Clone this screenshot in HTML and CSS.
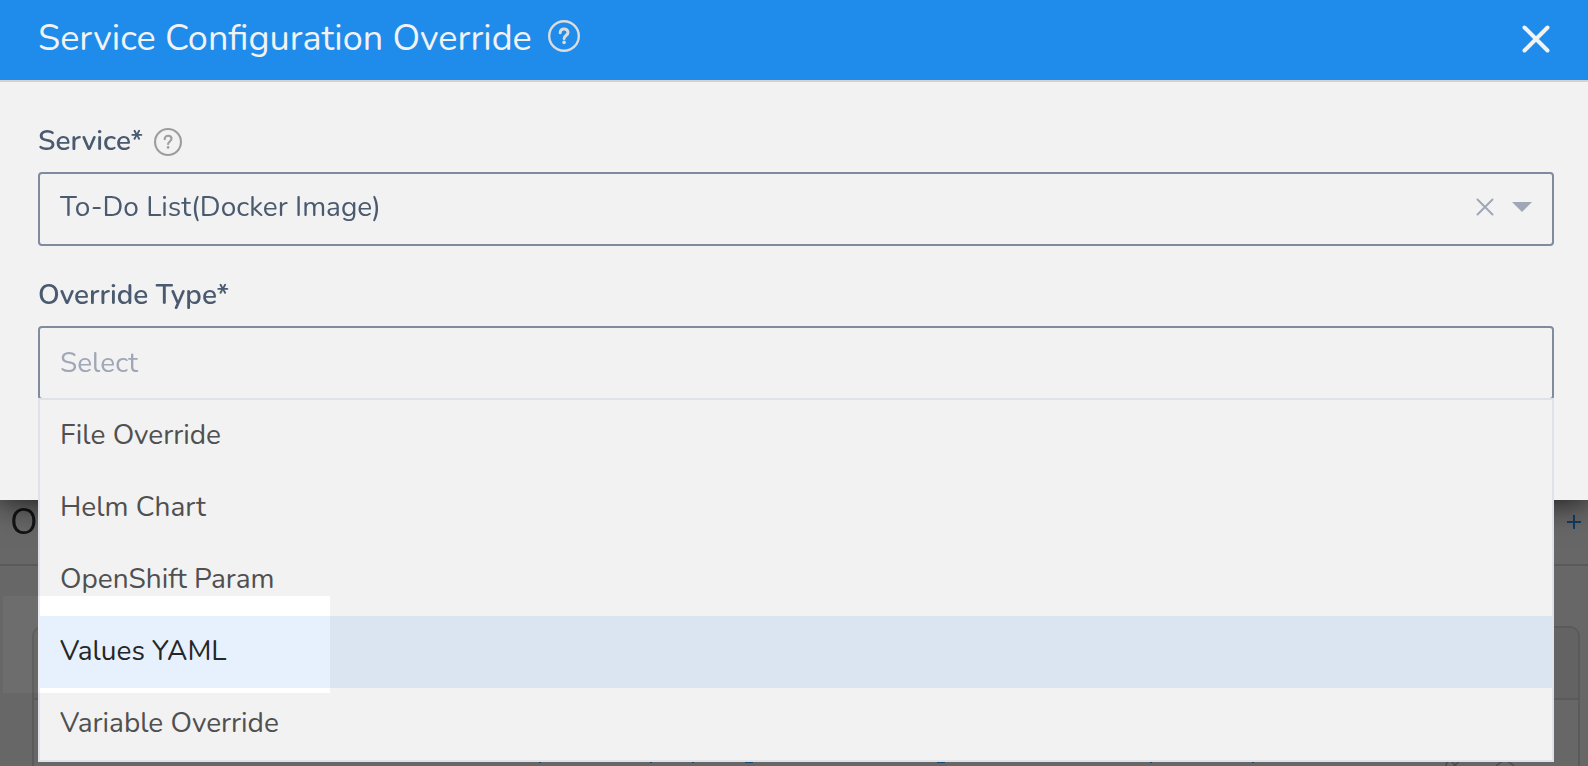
FILE: index.html
```html
<!DOCTYPE html>
<html lang="en">
<head>
<meta charset="utf-8">
<meta name="viewport" content="width=device-width, initial-scale=1">
<title>Service Configuration Override</title>
<link rel="stylesheet" href="styles.css">
</head>
<body>
<div class="page" aria-hidden="true">
  <div class="page-header">
    <span class="page-title">Ov</span>
    <svg class="page-add" width="14" height="14" viewBox="0 0 14 14"><path d="M7 0v14M0 7h14"/></svg>
  </div>
  <div class="panel">
    <div class="panel-head"></div>
    <div class="panel-body">
      <svg class="link-marks" width="1230" height="18" viewBox="0 0 1230 18"><path d="M505 .5h2M616 .5h2M658 .5h2M711 .5h8M903 .5h8M1116 .5h2M1218 .5h2"/></svg>
      <svg class="row-marks" width="74" height="18" viewBox="0 0 74 18"><path d="M2 4Q2 1 4 0M8 5L15 0M8 0l5 5M52 4l5-4Q61-2 65 0l5 4"/></svg>
    </div>
  </div>
</div>

<section class="modal" role="dialog" aria-labelledby="dialog-title">
  <header class="modal-header">
    <h1 class="modal-title" id="dialog-title">Service Configuration Override</h1>
    <button class="icon-button help help-light" type="button" aria-label="Help">
      <svg width="32" height="32" viewBox="0 0 32 32"><circle cx="16" cy="16" r="14.8"/><path class="mark" d="M12.2 12.8c0-2.4 1.7-3.9 3.9-3.9s3.9 1.4 3.9 3.5c0 3-3.9 3.1-3.9 6"/><circle class="dot" cx="16.1" cy="22.4" r="1.8"/></svg>
    </button>
    <button class="icon-button close" type="button" aria-label="Close">
      <svg width="28" height="28" viewBox="0 0 28 28"><path d="M2.5 2.5l23 23M25.5 2.5l-23 23"/></svg>
    </button>
  </header>
  <form class="form">
    <div class="field">
      <div class="label-row">
        <label for="service">Service*</label>
        <button class="icon-button help" type="button" aria-label="About service">
          <svg width="28" height="28" viewBox="0 0 32 32"><circle cx="16" cy="16" r="14.8"/><path d="M12.2 12.8c0-2.4 1.7-3.9 3.9-3.9s3.9 1.4 3.9 3.5c0 3-3.9 3.1-3.9 6"/><circle class="dot" cx="16.1" cy="22.2" r="1.5"/></svg>
        </button>
      </div>
      <div class="control control-filled">
        <input id="service" type="text" value="To-Do List(Docker Image)">
        <button class="icon-button clear" type="button" aria-label="Clear">
          <svg width="18" height="18" viewBox="0 0 18 18"><path d="M1.5 1.5l15 15M16.5 1.5l-15 15"/></svg>
        </button>
        <button class="icon-button arrow" type="button" aria-label="Open list">
          <svg width="20" height="10" viewBox="0 0 20 10"><path d="M0 0h20L10 10z"/></svg>
        </button>
      </div>
    </div>
    <div class="field">
      <div class="label-row">
        <label for="override-type">Override Type*</label>
      </div>
      <div class="control">
        <input id="override-type" type="text" placeholder="Select" role="combobox" aria-expanded="true" aria-controls="override-options">
        <ul class="menu" id="override-options" role="listbox">
          <li class="option" role="option">File Override</li>
          <li class="option" role="option">Helm Chart</li>
          <li class="option" role="option">OpenShift Param</li>
          <li class="option option-active" role="option" aria-selected="true"><span class="option-text">Values YAML</span><span class="spotlight"></span></li>
          <li class="option" role="option">Variable Override</li>
        </ul>
      </div>
    </div>
  </form>
</section>
</body>
</html>
```
FILE: styles.css
```css
* {
  box-sizing: border-box;
}

body {
  margin: 0;
  min-height: 100vh;
  overflow: hidden;
  background: #6d6d6d;
  font-family: Nunito, Lato, "Open Sans", sans-serif;
  font-size: 28px;
  line-height: 36px;
}

/* Dimmed page under the dialog */
.page {
  position: fixed;
  inset: 0;
  display: flex;
  flex-direction: column;
  padding-top: 480px;
}

.page-header {
  display: flex;
  align-items: center;
  justify-content: space-between;
  flex: none;
  height: 86px;
  padding: 0 7px 0 10px;
  border-bottom: 2px solid #5f5f5f;
}

.page-title {
  padding-top: 2px;
  font-size: 36px;
  color: #131415;
}

.page-add {
  fill: none;
  stroke: #153f63;
  stroke-width: 2;
}

.panel {
  flex: 1;
  display: flex;
  flex-direction: column;
  margin: 60px 8px 0 32px;
  border: 2px solid #5f5f5f;
  border-bottom: 0;
  border-radius: 10px 10px 0 0;
}

.panel-head {
  height: 72px;
  background: #696969;
  border-bottom: 2px solid #5f5f5f;
  border-radius: 8px 8px 0 0;
}

.panel-body {
  flex: 1;
  display: flex;
  align-items: flex-end;
  justify-content: space-between;
  padding-right: 60px;
  margin-bottom: -14px;
}

.link-marks {
  fill: none;
  stroke: #174a75;
}

.row-marks {
  fill: none;
  stroke: #505050;
  stroke-width: 1.5;
}

/* Dialog */
.modal {
  position: relative;
  min-height: 500px;
  background: #fff;
  box-shadow: 0 2px 30px rgba(0, 0, 0, 0.8);
}

.modal-header {
  display: flex;
  align-items: center;
  height: 82px;
  padding: 0 38px 2px;
  background: #2194f9;
  border-bottom: 2px solid #dedede;
}

.modal-title {
  margin: 0;
  font-size: 36px;
  line-height: 48px;
  font-weight: 400;
  color: #fff;
}

.icon-button {
  display: flex;
  flex: none;
  padding: 0;
  border: 0;
  background: none;
  fill: none;
  stroke-linecap: round;
}

.help {
  margin: 2px 0 0 11px;
  stroke: #a6a6a6;
  stroke-width: 2.4;
}

.help .dot {
  fill: #a6a6a6;
  stroke: none;
}

.help-light {
  margin: 0 0 6px 16px;
  stroke: #e8e8e8;
}

.help-light .dot {
  fill: #e8e8e8;
}

.help-light .mark {
  stroke-width: 3;
}

.close {
  margin-left: auto;
  stroke: #fff;
  stroke-width: 4;
}

.form {
  display: flex;
  flex-direction: column;
  gap: 30px;
  padding: 40px 34px 0 38px;
}

.label-row {
  display: flex;
  align-items: center;
  height: 38px;
  margin-bottom: 12px;
  font-weight: 600;
  color: #4f6077;
}

.control {
  position: relative;
  display: flex;
  align-items: center;
  height: 74px;
  padding: 0 20px;
  border: 2px solid #8793a8;
  border-radius: 4px;
}

.control-filled {
  padding-bottom: 4px;
}

.control input {
  flex: 1;
  min-width: 0;
  padding: 0;
  border: 0;
  outline: 0;
  background: none;
  color: #4f6077;
  font: inherit;
}

.control input::placeholder {
  color: #a9b0c0;
  opacity: 1;
}

.clear {
  stroke: #a9b1c0;
  stroke-width: 2;
}

.arrow {
  margin-left: 18px;
}

.arrow path {
  fill: #a9b1c0;
}

/* Drop-down list, laid over the page */
.menu {
  position: absolute;
  z-index: 1;
  top: 70px;
  left: -2px;
  right: -2px;
  margin: 0;
  padding: 0;
  list-style: none;
  background: #fff;
  border: 2px solid #ebeff4;
}

.option {
  display: flex;
  align-items: center;
  height: 72px;
  padding: 0 20px 2px;
  color: #555;
}

.option-active {
  position: relative;
  background: #e7f1fe;
  color: #262626;
}

/* Clear window around the chosen option; everything else is shaded */
.spotlight {
  position: absolute;
  z-index: 2;
  top: -20px;
  bottom: -5px;
  left: -37px;
  width: 327px;
  box-shadow: 0 0 0 2000px rgba(0, 0, 0, 0.051);
  pointer-events: none;
}
```
